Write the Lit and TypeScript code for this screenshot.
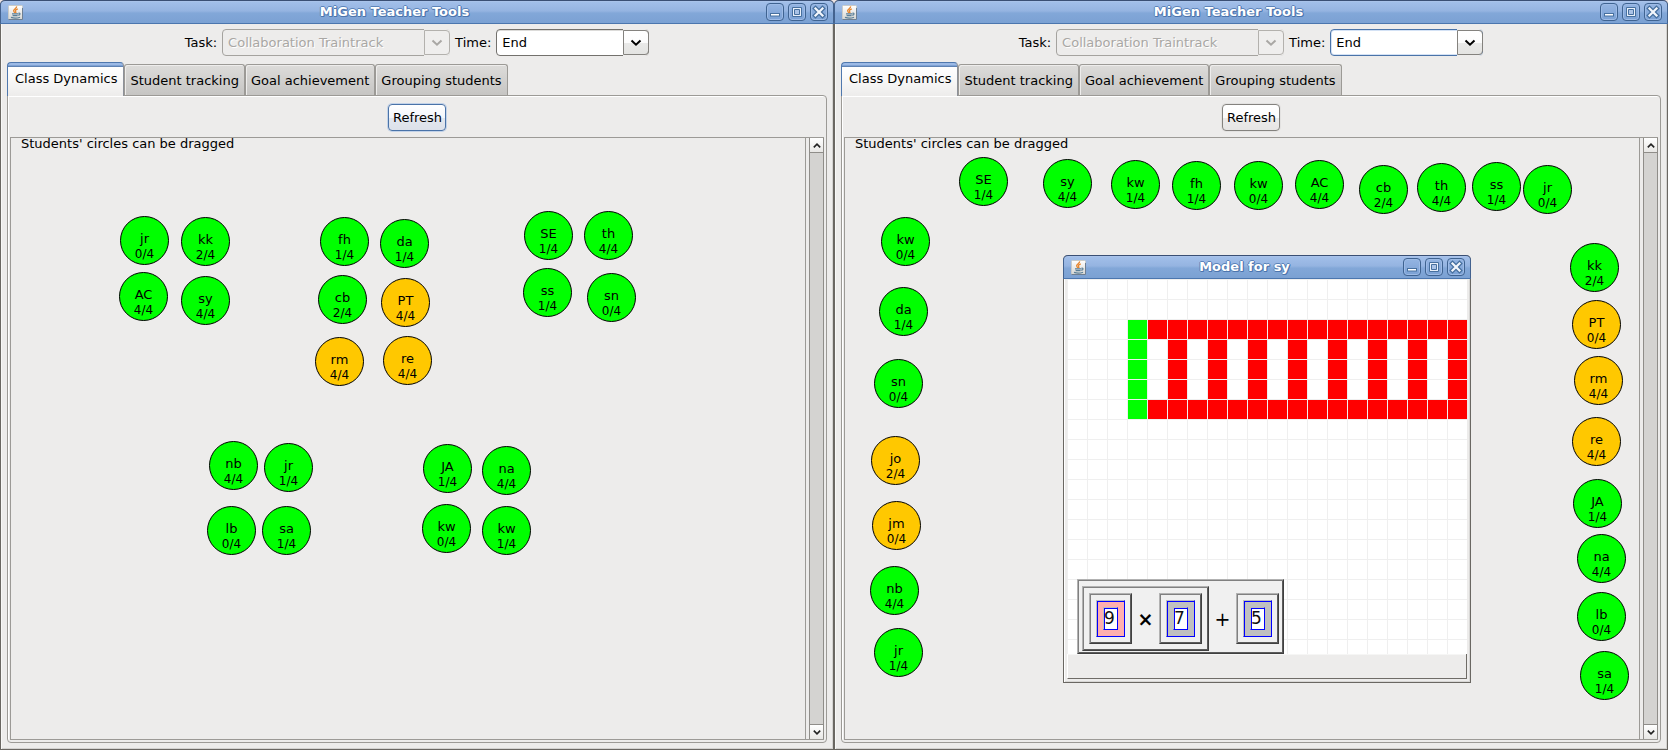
import { LitElement, html, css, svg } from "lit";
import { customElement, property, state } from "lit/decorators.js";
import { classMap } from "lit/directives/class-map.js";
import { styleMap } from "lit/directives/style-map.js";

type Student = { name: string; score: string; x: number; y: number; idle?: boolean };

const s = (name: string, score: string, x: number, y: number, idle = false): Student => ({ name, score, x, y, idle });

/* Positions are measured from the top left corner of the drag area. */
const GROUPED: Student[] = [
  s("jr", "0/4", 109, 78), s("kk", "2/4", 170, 79), s("AC", "4/4", 108, 134), s("sy", "4/4", 170, 138),
  s("fh", "1/4", 309, 79), s("da", "1/4", 369, 81), s("cb", "2/4", 307, 137), s("PT", "4/4", 370, 140, true),
  s("rm", "4/4", 304, 199, true), s("re", "4/4", 372, 198, true),
  s("SE", "1/4", 513, 73), s("th", "4/4", 573, 73), s("ss", "1/4", 512, 130), s("sn", "0/4", 576, 135),
  s("nb", "4/4", 198, 303), s("jr", "1/4", 253, 305), s("lb", "0/4", 196, 368), s("sa", "1/4", 251, 368),
  s("JA", "1/4", 412, 306), s("na", "4/4", 471, 308), s("kw", "0/4", 411, 366), s("kw", "1/4", 471, 368),
];

const SPREAD: Student[] = [
  s("SE", "1/4", 114, 19), s("sy", "4/4", 198, 21), s("kw", "1/4", 266, 22), s("fh", "1/4", 327, 23),
  s("kw", "0/4", 389, 23), s("AC", "4/4", 450, 22), s("cb", "2/4", 514, 27), s("th", "4/4", 572, 25),
  s("ss", "1/4", 627, 24), s("jr", "0/4", 678, 27),
  s("kw", "0/4", 36, 79), s("da", "1/4", 34, 149), s("sn", "0/4", 29, 221), s("jo", "2/4", 26, 298, true),
  s("jm", "0/4", 27, 363, true), s("nb", "4/4", 25, 428), s("jr", "1/4", 29, 490),
  s("kk", "2/4", 725, 105), s("PT", "0/4", 727, 162, true), s("rm", "4/4", 729, 218, true),
  s("re", "4/4", 727, 279, true), s("JA", "1/4", 728, 341), s("na", "4/4", 732, 396),
  s("lb", "0/4", 732, 454), s("sa", "1/4", 735, 513),
];

const CELL = 20;

@customElement("title-bar")
class TitleBar extends LitElement {
  @property() heading = "";

  static styles = css`
    :host { display: block; }
    .bar {
      display: flex; align-items: center; box-sizing: border-box; height: 24px; padding: 0 6px 0 7px;
      border: 1px solid #43628f; border-bottom-color: #4b76ae; border-top-color: #3a4f74;
      border-radius: 5px 5px 0 0; margin: 0 -1px;
      background: linear-gradient(#a3c0ea, #95b4e1 45%, #82a7d8 55%, #7ba1d3);
      box-shadow: inset 0 1px #a9c3ea;
    }
    .logo { display: block; width: 15px; height: 15px; }
    .heading {
      flex: 1; text-align: center; margin: 0; color: #fff; white-space: nowrap;
      font: bold 13px/22px "DejaVu Sans", sans-serif;
      text-shadow: 1px 0 #4c75ad, -1px 0 #5c84ba, 0 1px #4c75ad, 0 -1px #5c84ba, 1px 1px #4c75ad;
    }
    .tools { display: flex; gap: 4px; margin-right: -1px; }
    .tool {
      width: 18px; height: 18px; padding: 0; border: 1px solid #3f6391; border-radius: 4px;
      background: linear-gradient(#94b4e2, #7ba1d4); box-shadow: inset 0 0 0 1px #9dbbe6;
    }
    .glyph { display: block; width: 16px; height: 16px; }
  `;

  render() {
    return html`<header class="bar">
      <svg class="logo" viewBox="0 0 15 15" aria-hidden="true">
        <defs><linearGradient id="tile" x1="0" y1="0" x2="0" y2="1">
          <stop offset="0" stop-color="#ffffff"></stop><stop offset="1" stop-color="#d6d6d2"></stop>
        </linearGradient></defs>
        <rect x=".5" y=".5" width="14" height="14" rx="1" fill="url(#tile)" stroke="#c9cbc9"></rect>
        <path d="M.5 14.5H14.5V3" fill="none" stroke="#6e7f92"></path>
        <path d="M8.6 1.4C9 3.2 5.4 4 5.6 5.8c.1 1 1 1.4 1.4 2.2M9.8 3.8C8 4.6 7 5.4 7.6 6.4c.4.7.6 1 .1 1.8" fill="none" stroke="#e8862e" stroke-width="1.3"></path>
        <path d="M4 8.9h6.4M4.6 10.6h5M3 12.4c2.6.9 6.4.9 9-.2M10.6 8.2c1.8-.4 2 1.6-.3 2.2" fill="none" stroke="#5a7f98" stroke-width="1.2"></path>
      </svg>
      <h1 class="heading">${this.heading}</h1>
      <div class="tools">
        <button class="tool" aria-label="Minimize"><svg class="glyph" viewBox="0 0 16 16">
          <rect x="3.5" y="9.5" width="9" height="2.5" fill="#fff" stroke="#47709f"></rect></svg></button>
        <button class="tool" aria-label="Maximize"><svg class="glyph" viewBox="0 0 16 16">
          <path d="M3.5 3.5h9v9h-9z" fill="#e9f0fa" stroke="#47709f"></path>
          <path d="M5.5 5.5h5v5h-5z" fill="#a9c2e6" stroke="#47709f"></path></svg></button>
        <button class="tool" aria-label="Close"><svg class="glyph" viewBox="0 0 16 16">
          <path d="M4.5 4.5l7 7M11.5 4.5l-7 7" stroke="#47709f" stroke-width="4.6" stroke-linecap="square"></path>
          <path d="M4.5 4.5l7 7M11.5 4.5l-7 7" stroke="#f4f7fc" stroke-width="2.2" stroke-linecap="square"></path></svg></button>
      </div>
    </header>`;
  }
}

@customElement("model-window")
class ModelWindow extends LitElement {
  static styles = css`
    :host { display: block; }
    .window {
      display: flex; flex-direction: column; box-sizing: border-box; height: 100%;
      border: 1px solid #6a6762; border-top: 0; border-radius: 5px 5px 0 0; background: #edeceb;
      box-shadow: inset 1px 0 #fff, inset -1px 0 #d8d7d5, inset 0 -1px #d8d7d5;
    }
    .body { flex: 1; display: flex; flex-direction: column; margin: 0 3px 3px; min-height: 0; }
    .sheet {
      flex: 1; display: flex; align-items: flex-end; position: relative; overflow: hidden; padding: 0 0 0 10px;
      background: repeating-linear-gradient(90deg, #efefef 0 1px, transparent 1px 20px),
        repeating-linear-gradient(#efefef 0 1px, transparent 1px 20px), #fff;
    }
    .track { position: absolute; inset: 0; width: 100%; height: 100%; }
    .green { fill: #0f0; }
    .red { fill: #f00; }
    .box {
      position: relative; display: flex; align-items: center; background: #f0f0f0;
      border: 1px solid; border-color: #b2b2b2 #404040 #404040 #b2b2b2;
      box-shadow: inset 1px 1px #808080, inset -1px -1px #5c5c5c;
    }
    .sum { padding: 6px 4px 2px; }
    .product, .number { padding: 6px; }
    .ring {
      display: block; border: 1px solid; border-color: #bdbdbd #00f #00f #bdbdbd;
      box-shadow: inset 1px 1px #00f; padding: 6px; background: #c0c0c0;
    }
    .pink { background: #ffafaf; }
    .value {
      display: block; box-sizing: border-box; width: 15px; height: 23px; padding: 0 0 2px; margin: 0; text-align: left;
      border: 1px solid; border-color: #bdbdbd #00f #00f #bdbdbd; border-radius: 0; outline: 0;
      box-shadow: inset 1px 1px #00f; background: #fff; color: #111;
      font: 17px/19px "DejaVu Sans", sans-serif;
    }
    .sign { width: 27px; text-align: center; font: 19px/24px "DejaVu Sans", sans-serif; color: #000; }
    .times { font-weight: bold; }
    .status {
      height: 24px; border: 1px solid; border-width: 0 1px 1px; border-color: #fff #6f6c67 #6f6c67 #fff;
      box-shadow: inset 0 1px #f6f6f5;
    }
  `;

  private cells() {
    const out = [];
    for (let row = 0; row < 5; row++) {
      for (let col = 0; col < 17; col++) {
        const edge = row === 0 || row === 4;
        if (col === 0 || edge || col % 2 === 0) {
          out.push(svg`<rect class=${col === 0 ? "green" : "red"} x=${61 + col * CELL} y=${41 + row * CELL}
            width=${CELL - 1} height=${CELL - 1}></rect>`);
        }
      }
    }
    return out;
  }

  private number(value: string, pink = false) {
    return html`<span class="box number"><span class=${classMap({ ring: true, pink })}>
      <input class="value" aria-label="Number" .value=${value} /></span></span>`;
  }

  render() {
    return html`<section class="window">
      <title-bar heading="Model for sy"></title-bar>
      <div class="body">
        <div class="sheet">
          <svg class="track" aria-hidden="true">${this.cells()}</svg>
          <div class="box sum">
            <div class="box product">${this.number("9", true)}<span class="sign times">×</span>${this.number("7")}</div>
            <span class="sign">+</span>${this.number("5")}
          </div>
        </div>
        <div class="status"></div>
      </div>
    </section>`;
  }
}

@customElement("teacher-window")
class TeacherWindow extends LitElement {
  @property({ attribute: false }) students: Student[] = [];
  @property() focused = "";
  @property({ type: Boolean }) model = false;
  @state() private tab = 0;

  static styles = css`
    :host { display: block; min-width: 0; color: #000; font: 13px/18px "DejaVu Sans", sans-serif; }
    .window {
      display: flex; flex-direction: column; box-sizing: border-box; height: 100%;
      border: 1px solid #6a6762; border-top: 0; border-radius: 5px 5px 0 0; background: #edeceb;
      box-shadow: inset 1px 0 #f8f8f7, inset -1px 0 #d3d2d0, inset 0 -1px #d3d2d0;
    }
    .toolbar { display: flex; justify-content: center; align-items: center; gap: 5px; padding: 5px 6px 6px; }
    .label { white-space: nowrap; }
    .combo { display: grid; grid-template-columns: 1fr 26px; height: 27px; color: #000; }
    .task { width: 228px; color: #a9a7a4; }
    .time { width: 153px; }
    .select {
      grid-area: 1 / 1 / 2 / 3; appearance: none; margin: 0; padding: 0 26px 0 5px; width: 100%; height: 27px;
      border: 1px solid #73716d; border-radius: 4px; background: #fff; color: inherit; opacity: 1; outline: 0;
      font: 13px/18px "DejaVu Sans", sans-serif;
    }
    .task .select { border-color: #a5a39f; background: #edeceb; text-shadow: 1px 1px #fff; }
    .time .select { box-shadow: inset 0 1px #dcdbd9; }
    .combo.focus .select { border-color: #4a73a8; box-shadow: inset 0 0 0 1px #d4e2f5; }
    .drop {
      grid-area: 1 / 2 / 2 / 3; align-self: center; box-sizing: border-box; height: 25px; pointer-events: none; z-index: 1;
      display: grid; place-items: center; border: 1px solid #84827e; border-radius: 0 4px 4px 0;
      background: linear-gradient(#fff, #fcfcfc 50%, #e9e9e8 52%, #e4e4e2); box-shadow: 0 -1px #edeceb, 0 1px #edeceb;
    }
    .task .drop { border-color: #b3b1ad; background: #efeeed; }
    .chevron { width: 12px; height: 8px; fill: none; stroke: currentColor; stroke-width: 2; }

    .tabs { display: flex; align-items: flex-end; padding: 0 6px; height: 33px; }
    .tab {
      position: relative; box-sizing: border-box; height: 31px; padding: 2px 5px 0; margin: 0; white-space: nowrap;
      border: 1px solid #9c9a96; border-bottom: 0; border-radius: 3px 3px 0 0; color: #000;
      background: linear-gradient(#dddcda, #c6c5c3); box-shadow: inset 1px 1px #eeedec;
      font: 13px/18px "DejaVu Sans", sans-serif;
    }
    .tab.on {
      height: 34px; margin-bottom: -1px; padding: 0 6px 2px 7px; z-index: 1;
      border-color: #4f78ae #8d9199 #edeceb #4f78ae; border-radius: 4px 4px 0 0;
      background: linear-gradient(#9cbae6 0 2px, #7fa2d4 2px 3px, #5f83b4 3px 4px, #fff 4px, #fbfbfb 12px, #edeceb); box-shadow: none;
    }
    .panel {
      flex: 1; display: flex; flex-direction: column; min-height: 0; margin: 0 6px 6px; padding: 8px 2px 2px;
      border: 1px solid #9c9a96; border-radius: 0 4px 4px 4px; box-shadow: inset 1px 1px #fff;
    }
    .refresh {
      align-self: center; height: 27px; margin: 0 0 6px; padding: 0 3px 0 4px; border: 1px solid #84827e; border-radius: 4px; color: #000;
      background: linear-gradient(#fff, #fcfcfc 50%, #ecebea 52%, #e6e5e4); box-shadow: 0 0 0 1px #e3e2e1;
      font: 13px/18px "DejaVu Sans", sans-serif;
    }
    .refresh.focus { border-color: #4a73a8; background: linear-gradient(#fff, #f3f6fb 50%, #e2e7ef 52%, #dce1ea); box-shadow: 0 0 0 1px #c2d2e8; }
    .pane { flex: 1; display: flex; min-height: 0; gap: 3px; border: solid #9c9a96; border-width: 1px 0 1px 1px; }
    .area { flex: 1; position: relative; min-width: 0; border-right: 1px solid #9c9a96; }
    .hint { margin: 0 0 0 10px; font: 13px/11px "DejaVu Sans", sans-serif; white-space: nowrap; }
    .student {
      position: absolute; box-sizing: border-box; width: 49px; height: 49px; padding: 14px 0 0; cursor: grab;
      display: flex; flex-direction: column; align-items: center; gap: 1px; border: 1px solid #000; border-radius: 50%;
      background: #0f0; color: #000; font: 12px/15px "DejaVu Sans", sans-serif; touch-action: none;
    }
    .idle { background: #ffc800; }
    .name { font-size: 13px; }
    .model { position: absolute; left: 218px; top: 117px; width: 408px; height: 428px; }
    .scroll { display: flex; flex-direction: column; width: 15px; box-sizing: border-box; background: #d4d3d1; border: solid #8f8d89; border-width: 0 1px; }
    .rail { flex: 1; border: 0; }
    .step {
      width: 13px; height: 15px; padding: 0; display: grid; place-items: center; border: 0; color: #222;
      background: linear-gradient(#fff, #e8e7e5);
    }
    .up { border-bottom: 1px solid #8f8d89; }
    .down { border-top: 1px solid #8f8d89; }
    .arrow { width: 8px; height: 5px; fill: none; stroke: currentColor; stroke-width: 1.6; }
  `;

  private drag(event: PointerEvent, student: Student) {
    const node = event.currentTarget as HTMLElement;
    node.setPointerCapture(event.pointerId);
    const dx = event.clientX - student.x;
    const dy = event.clientY - student.y;
    node.onpointermove = (move) => {
      student.x = move.clientX - dx;
      student.y = move.clientY - dy;
      this.requestUpdate();
    };
    node.onpointerup = () => { node.onpointermove = null; };
  }

  private chevron() {
    return html`<span class="drop"><svg class="chevron" viewBox="0 0 12 8"><path d="M1.5 1.5L6 5.7L10.5 1.5"></path></svg></span>`;
  }

  render() {
    const tabs = ["Class Dynamics", "Student tracking", "Goal achievement", "Grouping students"];
    return html`<section class="window">
      <title-bar heading="MiGen Teacher Tools"></title-bar>
      <div class="toolbar">
        <label class="label" for="task">Task:</label>
        <span class="combo task">
          <select class="select" id="task" disabled><option>Collaboration Traintrack</option></select>${this.chevron()}
        </span>
        <label class="label" for="time">Time:</label>
        <span class=${classMap({ combo: true, time: true, focus: this.focused === "time" })}>
          <select class="select" id="time"><option>End</option></select>${this.chevron()}
        </span>
      </div>
      <div class="tabs" role="tablist">
        ${tabs.map((name, i) => html`<button role="tab" aria-selected=${i === this.tab ? "true" : "false"}
          class=${classMap({ tab: true, on: i === this.tab })} @click=${() => (this.tab = i)}>${name}</button>`)}
      </div>
      <div class="panel" role="tabpanel">
        <button class=${classMap({ refresh: true, focus: this.focused === "refresh" })}>Refresh</button>
        <div class="pane">
          <div class="area">
            <p class="hint">Students' circles can be dragged</p>
            ${this.students.map((st) => html`<button class=${classMap({ student: true, idle: !!st.idle })}
              style=${styleMap({ left: `${st.x}px`, top: `${st.y}px` })}
              @pointerdown=${(e: PointerEvent) => this.drag(e, st)}><span class="name">${st.name}</span><span>${st.score}</span></button>`)}
            ${this.model ? html`<model-window class="model"></model-window>` : null}
          </div>
          <div class="scroll">
            <button class="step up" aria-label="Scroll up"><svg class="arrow" viewBox="0 0 8 5"><path d="M.8 4.4L4 1.2L7.2 4.4"></path></svg></button>
            <div class="rail"></div>
            <button class="step down" aria-label="Scroll down"><svg class="arrow" viewBox="0 0 8 5"><path d="M.8.6L4 3.8L7.2.6"></path></svg></button>
          </div>
        </div>
      </div>
    </section>`;
  }
}

@customElement("app-root")
class AppRoot extends LitElement {
  static styles = css`
    :host { display: grid; grid-template-columns: 1fr 1fr; height: 100vh; background: #eee4e4; }
  `;

  render() {
    return html`
      <teacher-window .students=${GROUPED} focused="refresh"></teacher-window>
      <teacher-window .students=${SPREAD} focused="time" model></teacher-window>
    `;
  }
}
